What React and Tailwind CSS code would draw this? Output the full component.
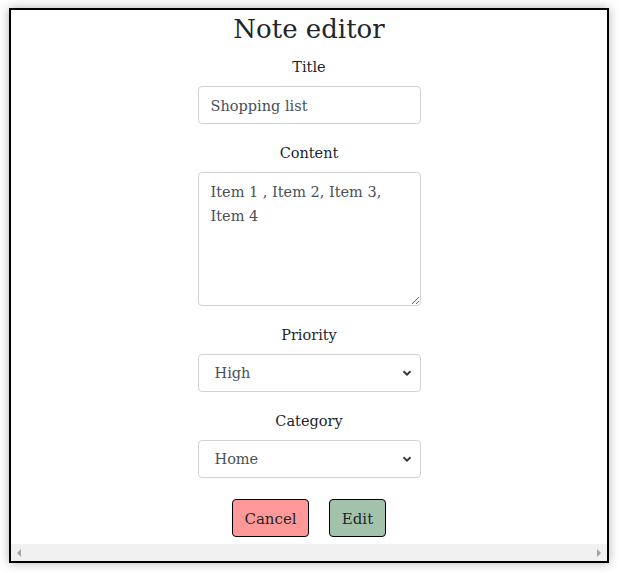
import React from "react";

const serif = { fontFamily: '"DejaVu Serif", "Liberation Serif", serif' };

function Chevron() {
  return (
    <svg
      className="pointer-events-none absolute right-[9px] top-1/2 -translate-y-1/2"
      width="10"
      height="8"
      viewBox="0 0 10 8"
    >
      <path d="M1.5 2.2 L5 5.6 L8.5 2.2" fill="none" stroke="#343a40" strokeWidth="2" />
    </svg>
  );
}

function Label({ children }) {
  return (
    <div className="h-[24px] leading-[26px] text-[14.5px] text-[#212529] text-center">{children}</div>
  );
}

function SelectBox({ value }) {
  return (
    <div className="relative mt-[8px] w-[223px] h-[38px]">
      <select
        defaultValue={value}
        className="w-full h-full appearance-none rounded-[4px] border border-[#ced4da] bg-white pl-[16px] pr-[30px] pt-[2px] text-[14.5px] text-[#495057] outline-none"
        style={serif}
      >
        <option>{value}</option>
      </select>
      <Chevron />
    </div>
  );
}

export default function App() {
  return (
    <div className="bg-white w-[624px] h-[573px] pt-[8px] pl-[9px]" style={serif}>
      <div className="w-[600px] h-[555px] border-2 border-black bg-white shadow-[0_0_10px_rgba(0,0,0,0.3)] flex flex-col">
        <div className="flex-1 flex flex-col items-center">
          <h1 className="h-[36px] leading-[38px] text-[26px] text-[#212529] text-center mb-[8px]">Note editor</h1>
          <Label>Title</Label>
          <input
            defaultValue="Shopping list"
            className="mt-[8px] w-[223px] h-[38px] rounded-[4px] border border-[#ced4da] bg-white px-[12px] pt-[2px] text-[14.5px] text-[#495057] outline-none"
            style={serif}
          />
          <div className="h-[16px]" />
          <Label>Content</Label>
          <textarea
            defaultValue={"Item 1 , Item 2, Item 3, Item 4"}
            className="mt-[8px] w-[223px] h-[134px] rounded-[4px] border border-[#ced4da] bg-white px-[12px] pt-[7px] pb-[5px] text-[14.5px] leading-[24px] text-[#495057] outline-none resize"
            style={serif}
          />
          <div className="h-[16px]" />
          <Label>Priority</Label>
          <SelectBox value="High" />
          <div className="h-[16px]" />
          <Label>Category</Label>
          <SelectBox value="Home" />
          <div className="flex gap-[20px] mt-[21px]">
            <button
              className="w-[77px] h-[38px] rounded-[4px] border border-black bg-[#ff9999] pt-[2px] text-[15px] text-[#212529]"
              style={serif}
            >
              Cancel
            </button>
            <button
              className="w-[57px] h-[38px] rounded-[4px] border border-black bg-[#a3c2ab] pt-[2px] text-[15px] text-[#212529]"
              style={serif}
            >
              Edit
            </button>
          </div>
        </div>
        <div className="h-[17px] bg-[#f1f1f1] flex items-center justify-between px-[5px]">
          <svg width="6" height="8" viewBox="0 0 6 8">
            <path d="M5 0 L1 4 L5 8 Z" fill="#a3a3a3" />
          </svg>
          <svg width="6" height="8" viewBox="0 0 6 8">
            <path d="M1 0 L5 4 L1 8 Z" fill="#a3a3a3" />
          </svg>
        </div>
      </div>
    </div>
  );
}
